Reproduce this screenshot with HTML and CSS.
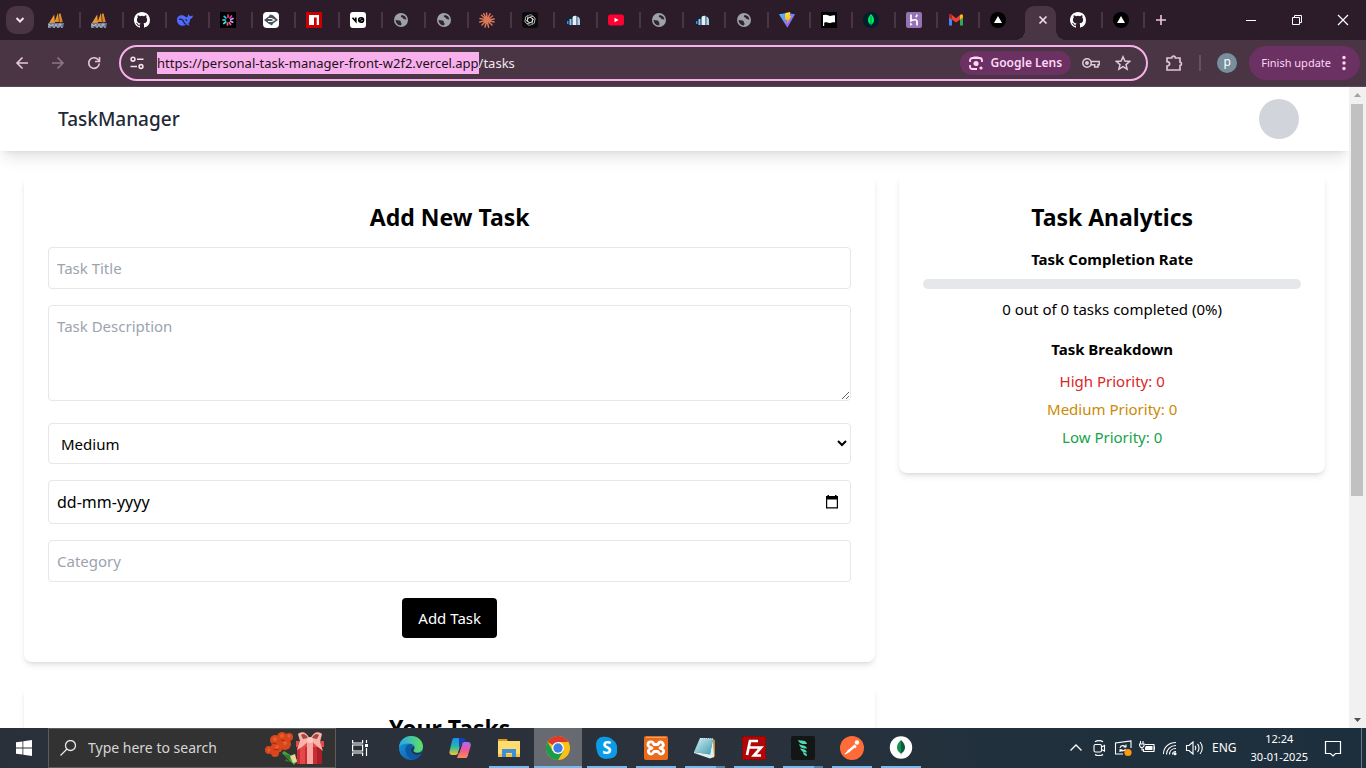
FILE: index.html
```html
<!DOCTYPE html>
<html lang="en">
<head>
<meta charset="utf-8">
<meta name="viewport" content="width=device-width, initial-scale=1">
<title>TaskManager</title>
<link rel="stylesheet" href="styles.css">
</head>
<body>
<svg class="defs" aria-hidden="true">
  <defs>
    <linearGradient id="sail" x1="0" y1="0" x2="1" y2="1"><stop offset="0" stop-color="#f8b54a"/><stop offset="1" stop-color="#d87a16"/></linearGradient>
    <linearGradient id="bolt" x1="0" y1="0" x2="0" y2="1"><stop offset="0" stop-color="#ffe83a"/><stop offset="1" stop-color="#ffa800"/></linearGradient>
    <linearGradient id="vitebg" x1="0" y1="0" x2="1" y2="1"><stop offset="0" stop-color="#41c7ff"/><stop offset="1" stop-color="#b83bf5"/></linearGradient>
    <linearGradient id="edgeA" x1="0" y1="0" x2="1" y2="0"><stop offset="0" stop-color="#28a8ee"/><stop offset="1" stop-color="#62e05c"/></linearGradient>
    <linearGradient id="edgeB" x1="0" y1="0" x2="1" y2="1"><stop offset="0" stop-color="#1b9de2"/><stop offset="1" stop-color="#0b4f9e"/></linearGradient>
    <linearGradient id="copA" x1="0" y1="0" x2="0" y2="1"><stop offset="0" stop-color="#1b8df5"/><stop offset=".5" stop-color="#26b8a8"/><stop offset="1" stop-color="#f4c430"/></linearGradient>
    <linearGradient id="copB" x1="0" y1="0" x2="0" y2="1"><stop offset="0" stop-color="#a56cf5"/><stop offset=".5" stop-color="#f0569a"/><stop offset="1" stop-color="#fb8a52"/></linearGradient>
    <linearGradient id="note" x1="0" y1="0" x2="1" y2="1"><stop offset="0" stop-color="#d7f1f5"/><stop offset="1" stop-color="#3c9cb0"/></linearGradient>
    <symbol id="mariadb" viewBox="0 0 16 16"><path fill="url(#sail)" d="M1 11 6.200 2.500 7 11zM6.500 10 10 .8l1 9.200zM11 2l1.400-.8L14.800 10l-3.200.4z"/><path fill="#6c7892" d="M0 11h16l-1 5h-2l-.8-3-.9 3H9l-1-3-1 3H5l-.8-2.500L3 16H0z"/><path stroke="#c5cbd7" stroke-width=".8" fill="none" d="M1 15.500V12l2 2 2-2v3.500m1.500 0 1.500-3.300 1.500 3.300M11 15.500v-3.300h2.300l-1 1.500 1.600 1.800"/></symbol>
    <symbol id="github" viewBox="0 0 16 16"><path fill="#fff" d="M8 0C3.580 0 0 3.580 0 8c0 3.540 2.290 6.530 5.470 7.590.4.070.55-.17.55-.38 0-.19-.01-.82-.01-1.490-2.010.37-2.530-.49-2.690-.94-.09-.23-.48-.94-.82-1.130-.28-.15-.68-.52-.01-.53.630-.01 1.080.58 1.230.82.720 1.210 1.870.87 2.330.66.070-.52.280-.87.510-1.070-1.780-.2-3.640-.89-3.640-3.950 0-.87.310-1.590.820-2.150-.08-.2-.36-1.020.080-2.120 0 0 .67-.21 2.200.82a7.600 7.600 0 0 1 4 0c1.530-1.040 2.200-.82 2.200-.82.440 1.100.160 1.920.080 2.120.510.560.820 1.270.820 2.150 0 3.070-1.870 3.750-3.650 3.950.290.250.540.730.540 1.480 0 1.070-.01 1.930-.01 2.200 0 .210.150.460.550.380A8 8 0 0 0 16 8c0-4.420-3.580-8-8-8z"/></symbol>
    <symbol id="deepseek" viewBox="0 0 16 16"><path fill="#4d6bfe" d="M8 4.600C5.500 2.200 0 3 0 8c0 4 3 5.800 5.800 5.800 2 0 3-.7 3.700-1.200 1 .8 2.300 1 3.300.6-.8-.3-1.300-1-1.300-1.700 1.500-1.400 1.700-3.300 1.600-4.500 1.500 0 2.700-1.200 2.900-3.700-.8.800-1.600.7-2.300 1-.9.200-1.700-1-2.700-2.200.2 2-.5 3-1 3.500z"/><path fill="none" stroke="#2c1b28" stroke-width="1.200" d="M2 7.400c2.500-1.300 4.500 1.200 5.200 3.300.5 1.200 1.300 1.500 2 1.300M8.300 7.500c1 .1 1.600.8 1.700 1.600"/></symbol>
    <symbol id="burst" viewBox="0 0 16 16"><path fill="#000" d="M0 0h16v16H0z"/><g stroke-width="1.700" stroke-linecap="round"><path stroke="#ff2e83" d="M8 5.200V3M10 6l1.500-2"/><path stroke="#c8a2ff" d="M10.700 7.500 13 6.500M10.600 9.300l2.200.9"/><path stroke="#ff5c8c" d="m9.300 10.600 1.300 2M7.500 11v2"/><path stroke="#3be9d0" d="m5.800 10-2 1.500M5.300 8H3"/><path stroke="#27c8ff" d="M6 6 4.200 4.300"/></g></symbol>
    <symbol id="dyte" viewBox="0 0 16 16"><rect width="16" height="16" rx="4" fill="#fff"/><path fill="#4a4f5b" d="m1 8 5-3.800 1-1.700 3 .7L15 8l-5 3.500-1 1.900-3.300-1.600z"/><path stroke="#fff" stroke-width="1.100" fill="none" d="M5 9.500h4L11.500 8 8.500 6.500H5.200"/></symbol>
    <symbol id="npm" viewBox="0 0 16 16"><path fill="#c00" d="M0 0h16v16H0z"/><path fill="#fff" d="M3 3h10v10h-2.300V5.500H8V13H3z"/></symbol>
    <symbol id="vzero" viewBox="0 0 16 16"><rect width="16" height="16" rx="3" fill="#fff"/><path fill="none" stroke="#000" stroke-width="1.700" d="m2.500 5.800 3.300 3.600V5.500M8.700 8c0-3 4.800-3 4.800 0s-4.800 3-4.800 0zm.6 1.600 3.600-3.400"/></symbol>
    <symbol id="globe" viewBox="0 0 16 16"><circle cx="8" cy="8" r="7" fill="#9da1a9"/><path fill="#33232f" d="M2.600 7.800c1.500.8 3.200.5 4.500 1 1.200.5.200 1.600 1.100 2.300.8.600.3 1.600-.4 2.400-3-.1-5.200-2.500-5.200-5.700zM8.600 2.900c-1.300 1.300-.8 2.100.2 2.400 1.100.2 1 1.500 2.100 1.800 1.200.3 1.600.5 2.500.3C13.200 4.800 11.200 3 8.600 2.900z"/></symbol>
    <symbol id="claude" viewBox="0 0 16 16"><g stroke="#d97757" stroke-width="1.500" stroke-linecap="round"><path d="m8 8-.4-7M8 8l3-6.300M8 8l5.500-4M8 8l7.200-1M8 8l7 2M8 8l5 5M8 8l1.500 7.200M8 8l-2 7M8 8l-5 5M8 8l-7.200 2M8 8 1 6.500M8 8 2.500 3.300M8 8 4.700 1.700"/></g></symbol>
    <symbol id="openai" viewBox="0 0 16 16"><rect width="16" height="16" rx="3" fill="#0c0c0c"/><g fill="none" stroke="#e4e4e4" stroke-width=".7"><path id="k" d="M8 5.200 10.500 6.700V10c0 2-1.500 3.200-3 3.200-1 0-1.800-.5-2.300-1.200"/><use href="#k" transform="rotate(60 8 8)"/><use href="#k" transform="rotate(120 8 8)"/><use href="#k" transform="rotate(180 8 8)"/><use href="#k" transform="rotate(240 8 8)"/><use href="#k" transform="rotate(300 8 8)"/></g></symbol>
    <symbol id="stripes" viewBox="0 0 16 16"><rect x=".5" y="3" width="8" height="11" rx="2" fill="#1e2230"/><path fill="#3b8fe0" d="M2 9h1.500v3H2z"/><path fill="#8fcdf7" d="M4.500 7h2v6h-2z"/><path fill="#dff3ff" d="M7.500 6c0-2 2-2.500 4-2v9h-4z"/><path fill="#a7d8f2" d="M12.300 4.500c2 .5 2.700 2.300 2.700 4V13h-2.700z"/></symbol>
    <symbol id="youtube" viewBox="0 0 16 16"><rect y="2.500" width="16" height="11" rx="2.500" fill="#ff0033"/><path fill="#fff" d="m6.500 5.800 4 2.200-4 2.200z"/></symbol>
    <symbol id="vite" viewBox="0 0 16 16"><path fill="url(#vitebg)" d="M0 2.200 8 1l8 1.200L8.400 15.700z"/><path fill="url(#bolt)" d="m6.300 1 5-1-.8 4.300 2-.4-4.700 8 .7-4.500-2.500.4z"/></symbol>
    <symbol id="flag" viewBox="0 0 16 16"><path fill="#000" d="M0 0h16v16H0z"/><path fill="#fff" d="M2 3h1.200c3-1.200 4.300 1.400 7 .8 1.300-.2 2-.8 3.800-.3v7c-2.200-.6-3.600.8-5.700.4-2-.4-3.300-.9-5.100-.1V14H2z"/></symbol>
    <symbol id="mongo" viewBox="0 0 16 16"><circle cx="8" cy="8" r="8" fill="#001e2b"/><path fill="#00ed64" d="M8 2c-2 2-3 4-3 6s1 3.400 2.700 4.600L8 14l.4-1.400C10 11.400 11 10 11 8S10 4 8 2z"/><path stroke="#006b36" stroke-width=".6" d="M8 4v9"/></symbol>
    <symbol id="heroku" viewBox="0 0 16 16"><rect width="16" height="16" rx="2" fill="#9572b6"/><path fill="none" stroke="#fff" stroke-width="1.700" d="M5 2.500v6.300c3-1.400 6-1.600 6 .7v4M11 2.500c0 1.200-.5 2-1.200 2.700"/><path fill="#fff" d="m4.200 10.500 2.300 1.700-2.300 1.700z"/></symbol>
    <symbol id="gmail" viewBox="0 0 16 16"><path fill="#4285f4" d="M1 13.500V4.300l3 2.200v7z"/><path fill="#34a853" d="M12 13.500v-7l3-2.200v9.200z"/><path fill="#ea4335" d="M1 5.500V3.800c0-1.300 1.400-1.900 2.400-1.200L8 6.200l4.600-3.600c1-.7 2.400-.1 2.400 1.200v1.700L8 10.500z"/><path fill="#fbbc04" d="M12 3.200c1.400-1.200 3-.5 3 1v1.300l-3 2.200z"/><path fill="#c5221f" d="M1 5.500V4c0-1.500 1.700-2 3-.9v4.600z"/></symbol>
    <symbol id="vercel" viewBox="0 0 16 16"><circle cx="8" cy="8" r="8" fill="#000"/><path fill="#fff" d="m8 4 4 7H4z"/></symbol>
  </defs>
</svg>
<div class="desktop">
  <div class="tabstrip">
    <button class="tab-search" aria-label="Search tabs"><svg class="i16" viewBox="0 0 16 16" fill="none" stroke="#f3dfec" stroke-width="2"><path d="m4.500 6 3.500 3.500L11.500 6"/></svg></button>
    <div class="tabs" role="tablist">
      <button class="tab" role="tab" aria-label="MariaDB"><svg class="i16"><use href="#mariadb"/></svg></button>
      <button class="tab" role="tab" aria-label="MariaDB"><svg class="i16"><use href="#mariadb"/></svg></button>
      <button class="tab" role="tab" aria-label="GitHub"><svg class="i16"><use href="#github"/></svg></button>
      <button class="tab" role="tab" aria-label="DeepSeek"><svg class="i16"><use href="#deepseek"/></svg></button>
      <button class="tab" role="tab" aria-label="Loader"><svg class="i16"><use href="#burst"/></svg></button>
      <button class="tab" role="tab" aria-label="Editor"><svg class="i16"><use href="#dyte"/></svg></button>
      <button class="tab" role="tab" aria-label="npm"><svg class="i16"><use href="#npm"/></svg></button>
      <button class="tab" role="tab" aria-label="v0"><svg class="i16"><use href="#vzero"/></svg></button>
      <button class="tab" role="tab" aria-label="Page"><svg class="i16"><use href="#globe"/></svg></button>
      <button class="tab" role="tab" aria-label="Page"><svg class="i16"><use href="#globe"/></svg></button>
      <button class="tab" role="tab" aria-label="Claude"><svg class="i16"><use href="#claude"/></svg></button>
      <button class="tab" role="tab" aria-label="ChatGPT"><svg class="i16"><use href="#openai"/></svg></button>
      <button class="tab" role="tab" aria-label="App"><svg class="i16"><use href="#stripes"/></svg></button>
      <button class="tab" role="tab" aria-label="YouTube"><svg class="i16"><use href="#youtube"/></svg></button>
      <button class="tab" role="tab" aria-label="Page"><svg class="i16"><use href="#globe"/></svg></button>
      <button class="tab" role="tab" aria-label="App"><svg class="i16"><use href="#stripes"/></svg></button>
      <button class="tab" role="tab" aria-label="Page"><svg class="i16"><use href="#globe"/></svg></button>
      <button class="tab" role="tab" aria-label="Vite"><svg class="i16"><use href="#vite"/></svg></button>
      <button class="tab" role="tab" aria-label="Flag"><svg class="i16"><use href="#flag"/></svg></button>
      <button class="tab" role="tab" aria-label="MongoDB"><svg class="i16"><use href="#mongo"/></svg></button>
      <button class="tab" role="tab" aria-label="Heroku"><svg class="i16"><use href="#heroku"/></svg></button>
      <button class="tab" role="tab" aria-label="Gmail"><svg class="i16"><use href="#gmail"/></svg></button>
      <button class="tab tab-last" role="tab" aria-label="Vercel"><svg class="i16"><use href="#vercel"/></svg></button>
      <button class="tab tab-active" role="tab" aria-selected="true" aria-label="TaskManager"><svg class="i16" viewBox="0 0 16 16" stroke="#f3dfec" stroke-width="1.600"><path d="m4.500 4.500 7 7m0-7-7 7"/></svg></button>
      <button class="tab" role="tab" aria-label="GitHub"><svg class="i16"><use href="#github"/></svg></button>
      <button class="tab" role="tab" aria-label="Vercel"><svg class="i16"><use href="#vercel"/></svg></button>
    </div>
    <button class="newtab" aria-label="New tab"><svg class="i16" viewBox="0 0 16 16" stroke="#e9c6de" stroke-width="1.600"><path d="M8 3v10M3 8h10"/></svg></button>
    <div class="winctl">
      <button aria-label="Minimize"><svg class="i16" viewBox="0 0 16 16" stroke="#fff"><path d="M3 8.500h10"/></svg></button>
      <button aria-label="Restore"><svg class="i16" viewBox="0 0 16 16" stroke="#fff" fill="none"><path d="M3.500 5.500h7v7h-7zM5.500 5.500v-2h7v7h-2"/></svg></button>
      <button aria-label="Close"><svg class="i16" viewBox="0 0 16 16" stroke="#fff" stroke-width="1.200"><path d="m3 3 10 10m0-10L3 13"/></svg></button>
    </div>
  </div>

  <div class="toolbar">
    <nav class="nav" aria-label="History">
      <button aria-label="Back"><svg class="i16" viewBox="0 0 16 16" fill="none" stroke="#e9c6de" stroke-width="1.600"><path d="M14 8H3m5.500-5.500L3 8l5.500 5.500"/></svg></button>
      <button aria-label="Forward"><svg class="i16" viewBox="0 0 16 16" fill="none" stroke="#907489" stroke-width="1.600"><path d="M2 8h11M7.500 2.500 13 8l-5.500 5.500"/></svg></button>
      <button aria-label="Reload"><svg class="i16" viewBox="0 0 16 16" fill="none" stroke="#e9c6de" stroke-width="1.600"><path d="M13.300 8.500A5.300 5.300 0 1 1 12 4.500l1 1M13.500 2v4.500H9"/></svg></button>
    </nav>
    <form class="omnibox">
      <svg class="i16" viewBox="0 0 16 16" fill="none" stroke="#f3dfec" stroke-width="1.600"><circle cx="4" cy="4.200" r="1.900"/><path d="M8 4.200h6.500M1.500 11.500H8"/><circle cx="12" cy="11.500" r="1.900"/></svg>
      <input class="url" id="url" type="text" aria-label="Address" spellcheck="false" value="https://personal-task-manager-front-w2f2.vercel.app/tasks">
      <button class="lens" type="button"><svg class="i16" viewBox="0 0 16 16" fill="none" stroke="#ffd7f5" stroke-width="1.800"><path d="M2 7V5.500A2.500 2.500 0 0 1 4.500 3h7A2.500 2.500 0 0 1 14 5.500V7M5.500 2.300h5M2 10v1.500A2.500 2.500 0 0 0 4.500 14H9"/><circle cx="8" cy="8.500" r="1.700" fill="#ffd7f5"/><circle cx="13" cy="13" r=".7"/></svg><span>Google Lens</span></button>
      <button class="omni-btn" type="button" aria-label="Passwords"><svg class="key" viewBox="0 0 18 16" fill="none" stroke="#e0cbd9" stroke-width="1.500"><circle cx="5" cy="8" r="4.200"/><path d="M9 6.500h8.200v3.300H16V12h-3.300V9.700H9"/><circle cx="5" cy="8" r="1.200" fill="#e0cbd9"/></svg></button>
      <button class="omni-btn" type="button" aria-label="Bookmark"><svg class="i16" viewBox="0 0 16 16" fill="none" stroke="#e0cbd9" stroke-width="1.500"><path d="m8 1.800 1.900 4.300 4.700.4-3.600 3.100 1.100 4.600L8 11.700l-4.100 2.500L5 9.600 1.400 6.500l4.700-.4z"/></svg></button>
    </form>
    <button class="ext" aria-label="Extensions"><svg class="i18" viewBox="0 0 18 18" fill="none" stroke="#e0c3d6" stroke-width="1.700"><path d="M2 4h4.700c0-2.500 3.600-2.500 3.600 0H15v4.200c2 0 2 3.300 0 3.300V16H2v-4c3.500-.3 3.500-4 0-4.300z"/></svg></button>
    <span class="rule"></span>
    <button class="profile" aria-label="Profile">p</button>
    <button class="update"><span>Finish update</span><svg class="dots" viewBox="0 0 4 16" fill="#ffd7f5"><circle cx="2" cy="2.500" r="1.700"/><circle cx="2" cy="8" r="1.700"/><circle cx="2" cy="13.500" r="1.700"/></svg></button>
  </div>

  <div class="viewport">
    <div class="page">
      <header class="site-header"><a class="brand" href="#">TaskManager</a><button class="avatar" aria-label="Account"></button></header>
      <main class="content">
        <div class="column">
          <section class="card">
            <h2>Add New Task</h2>
            <form class="task-form">
              <input class="field" type="text" placeholder="Task Title" aria-label="Task Title">
              <textarea class="field area" placeholder="Task Description" aria-label="Task Description"></textarea>
              <select class="field pick" aria-label="Priority"><option>Low</option><option selected>Medium</option><option>High</option></select>
              <div class="date"><input class="field date-input" type="text" value="dd-mm-yyyy" aria-label="Due date"><button class="date-btn" type="button" aria-label="Open calendar"><svg class="i16" viewBox="0 0 16 16"><path fill="#000" d="M3.500 1H5v1h6V1h1.500v1H14v12.500H2V2h1.500zM3.200 5.500v7.800h9.600V5.500z" fill-rule="evenodd"/></svg></button></div>
              <input class="field" type="text" placeholder="Category" aria-label="Category">
              <button class="submit" type="button">Add Task</button>
            </form>
          </section>
          <section class="card"><h2>Your Tasks</h2></section>
        </div>
        <aside class="card analytics">
          <h2>Task Analytics</h2>
          <h3>Task Completion Rate</h3>
          <div class="progress" role="progressbar" aria-valuenow="0" aria-label="Completion"></div>
          <p class="rate">0 out of 0 tasks completed (0%)</p>
          <h3>Task Breakdown</h3>
          <ul class="breakdown"><li class="high">High Priority: 0</li><li class="medium">Medium Priority: 0</li><li class="low">Low Priority: 0</li></ul>
        </aside>
      </main>
    </div>
    <div class="scrollbar" aria-hidden="true">
      <svg class="arrow" viewBox="0 0 17 17"><path fill="#a3a3a3" d="m8.500 6 3.500 4H5z"/></svg>
      <div class="track"><div class="thumb"></div></div>
      <svg class="arrow" viewBox="0 0 17 17"><path fill="#505050" d="m8.500 11 3.500-4H5z"/></svg>
    </div>
  </div>

  <footer class="taskbar">
    <button class="start" aria-label="Start"><svg class="i16" viewBox="0 0 16 16" fill="#fff"><path d="m0 2.300 6.500-.9v6.200H0zM7.300 1.300 16 0v7.600H7.300zM0 8.400h6.500v6.200L0 13.700zM7.300 8.400H16V16l-8.700-1.300z"/></svg></button>
    <label class="search">
      <svg class="i16" viewBox="0 0 16 16" fill="none" stroke="#e8e8e8" stroke-width="1.300"><circle cx="10.500" cy="5.500" r="5"/><path d="M7 9 .5 15.500"/></svg>
      <input type="text" placeholder="Type here to search" aria-label="Type here to search">
      <svg class="gift" viewBox="0 0 60 36">
        <path fill="#47a33a" d="m20 21 14 9-4 5-12-12z"/><path fill="#2d7d2c" d="m20 24 8 2-3 4zM22 29l5 3-6-1z"/><path fill="#e8d79c" d="m26 26 5-2 2 8-4 1z"/>
        <g fill="#d9451d"><circle cx="11" cy="10" r="5"/><circle cx="18" cy="7" r="5"/><circle cx="25" cy="7" r="4"/><circle cx="21" cy="14" r="6"/><circle cx="13" cy="17" r="6"/><circle cx="5" cy="20" r="4"/><circle cx="11" cy="23" r="4"/></g>
        <g fill="#e85f2c"><circle cx="11" cy="9" r="2"/><circle cx="18" cy="6" r="2"/><circle cx="21" cy="13" r="2"/><circle cx="13" cy="17" r="2"/><circle cx="25" cy="6" r="1.500"/><circle cx="5" cy="20" r="1.500"/></g>
        <path stroke="#a92a12" fill="none" d="m8 13 5 1m4-4 4 1m-11 9 5-1"/>
        <path fill="#c92d33" d="M33 14h25v20H33z"/><path fill="#e5484b" d="M32 11h28v6H32zM36 17h5v17h-5z"/><path fill="#a91f28" d="M53 17h5v17h-5z"/><path fill="#f6a9a3" d="M43 10h6v24h-6z"/>
        <path fill="#f7b3ac" d="M46 9c-4-8-9-8-12-5l2 7-3 9 5-3 8-7 8 7 5 4-3-9 2-8c-3-3-8-3-12 5z"/><path fill="#a8473e" d="M44 8c-2-4-5-5-7-3l2 4zm4 0c2-4 5-5 7-3l-2 4z"/><circle cx="46" cy="10" r="3" fill="#fdc9c1"/>
      </svg>
    </label>
    <button class="app" aria-label="Task View"><svg class="i16" viewBox="0 0 16 16" fill="none" stroke="#fff" stroke-width="1.200"><path d="M.6 0v3h10V0M.6 5h10v6H.6zM.6 16v-3h10v3M14.500 0v3M14.500 8v8"/><path fill="#fff" stroke="none" d="M13 4h3v3h-3z"/></svg></button>
    <div class="apps">
      <button class="app" aria-label="Edge"><svg class="i24" viewBox="0 0 24 24"><circle cx="12" cy="12" r="12" fill="url(#edgeB)"/><path fill="url(#edgeA)" d="M0 11C1 4 6 0 12 0c7 0 12 5 12 10.500 0 4-3 6-6 6-3.500 0-4-2-3-3 2-2 0-6-5-6C5 7.500 1 9 0 11z"/><path fill="#0c59a4" d="M12 8c-5 0-6 4-5.500 7 .7 5 5 8 9 8.500 3-.7 5.500-3 7-5.500-5 2-11 0-10.500-4.500.1-1.500 1.500-2 1.500-3S13 8 12 8z"/><path fill="#2a313b" d="M15 10.500c-2.500.8-3.500 3-2.500 5 1.500 3.500 7 4 10 2 .8-.6.5-1.500-.5-1-2.500 1-6 .7-7.300-.8-1.200-1.400 1-3 .3-5.200z"/></svg></button>
      <button class="app" aria-label="Copilot"><svg class="i24" viewBox="0 0 24 24"><path fill="url(#copA)" d="M6 2h9l-5 15c-.5 1.500-1.500 2-3 2H4c-2 0-3-2-2.500-3.500L4 5c.5-2 1-3 2-3z"/><path fill="url(#copB)" d="M18 22H9l5-14c.5-1.500 1.500-2 3-2h3c2 0 3.300 2 2.700 4L20 19c-.5 2-1 3-2 3z"/><path fill="#173fb5" d="M11 2h4c2 0 2 2 3 4h-2c-2 0-3 1-3.500 2.500L11 12z"/><path fill="#2a313b" d="m13 8-3 9h1.300l3-9z"/></svg></button>
      <button class="app open" aria-label="File Explorer"><svg class="i24" viewBox="0 0 24 24"><path fill="#d99a16" d="M1 3h9l1 3H1z"/><path fill="#ffdb70" d="M1 5h22v16H1z"/><path fill="#f4c046" d="M1 18h22v3H1z"/><path fill="#3f8fd4" d="M5 13h14v8h-4v-4H9v4H5z"/></svg></button>
      <button class="app open current" aria-label="Chrome"><svg class="i24" viewBox="0 0 24 24"><circle cx="12" cy="12" r="12" fill="#fbc116"/><path fill="#db3a2c" d="M12 12 1.600 6A12 12 0 0 1 22.400 6H12z"/><path fill="#1c9b4b" d="M12 12 6.700 15 1.600 6A12 12 0 0 0 12 24l5.500-9z"/><circle cx="12" cy="12" r="6" fill="#fff"/><circle cx="12" cy="12" r="4.700" fill="#3c7de8"/></svg></button>
      <button class="app open" aria-label="Skype"><svg class="i24" viewBox="0 0 24 24"><path fill="#0a9ce6" d="M7 1c4-.5 8 0 11 3 3 2 4.500 5 4 9 1 6-3 10-8 9.500C8 24 3 21 2 15 0 8 1 2 7 1z"/><text class="skype" x="12" y="18" text-anchor="middle">S</text></svg></button>
      <button class="app open" aria-label="XAMPP"><svg class="i24" viewBox="0 0 24 24"><rect width="24" height="24" rx="2" fill="#ea6b1b"/><path fill="#f6a36a" d="M2 1h20v1H2z"/><path fill="none" stroke="#fff" stroke-width="2.800" stroke-linejoin="round" d="M7 6a2.500 2.500 0 0 0-1 5l2 1-2 1a2.600 2.600 0 1 0 3 4l1-1.500h4l1 1.500a2.600 2.600 0 1 0 3-4l-2-1 2-1a2.500 2.500 0 1 0-3-4.500L14 8.500h-4L9 6.500A2.500 2.500 0 0 0 7 6z"/></svg></button>
      <button class="app open multi" aria-label="Notepad"><svg class="i24" viewBox="0 0 24 24"><path fill="#b48c35" d="m20 3 2 1v16l-2 2z"/><path fill="url(#note)" d="m7 2 13 .5-3 16L1 16z"/><path fill="#dceff4" d="M1 16 17 18.500 20 3l1 18-4 1.500L1 17z"/><path stroke="#eefaff" d="m7 2.500 13 .5" stroke-dasharray="1 1"/></svg></button>
      <button class="app open" aria-label="FileZilla"><svg class="i24" viewBox="0 0 24 24"><path fill="#b00808" d="M0 0h24v24H0z"/><path fill="none" stroke="#5d0508" stroke-dasharray="1 2" d="M.5.500h23v23H.500z"/><path fill="none" stroke="#fff" stroke-width="2.700" d="M5 19 8 5h8M6.500 11.500H13M12 11.500h7L12 19.500h7"/></svg></button>
      <button class="app open multi" aria-label="Terminal"><svg class="i24" viewBox="0 0 24 24"><rect width="24" height="24" rx="2" fill="#121615"/><path fill="#54d8b4" d="M7 4c3 1 8-.5 9 4-4 .5-8-.5-9-4zM8 8c2 2 7 .5 8 4.500-4 .5-7-.5-8-4.500zM9 12c2 1.500 6 .5 7 4.500-4 0-6-1.500-7-4.500zM12 16c2 1 4 1 4 4-2 0-4-1.500-4-4z"/></svg></button>
      <button class="app open" aria-label="Postman"><svg class="i24" viewBox="0 0 24 24"><circle cx="12" cy="12" r="12" fill="#ff6c37"/><circle cx="17" cy="6.500" r="2.200" fill="#fff"/><path fill="#fff" d="m14.500 8.500 2 1.500-7.200 6.300-3.500 1.500 1.700-3.300z"/><path stroke="#fff" stroke-width="1.300" d="m5 18 3-2M16 10l-1 2"/></svg></button>
      <button class="app open" aria-label="MongoDB Compass"><svg class="i24" viewBox="0 0 24 24"><circle cx="12" cy="11.500" r="11.200" fill="#fff"/><path fill="#12924f" d="M12 4c-3 3-4 5-4 7.500S9.500 16 11.700 17.500l.3 2z"/><path fill="#0a5d3c" d="M12 4c3 3 4 5 4 7.500s-1.500 4.500-3.700 6l-.3 2z"/></svg></button>
    </div>
    <div class="tray">
      <svg class="i16" viewBox="0 0 16 16" fill="none" stroke="#fff" stroke-width="1.300"><path d="m2.500 10.500 5.500-5.500 5.500 5.500"/></svg>
      <svg class="i16" viewBox="0 0 16 16" fill="none" stroke="#fff" stroke-width="1.100"><rect x="3" y="4.500" width="7.500" height="7.500" rx="1.500"/><path d="m10.500 7 3-1.500v5.500l-3-1.500M4 1.800C6 .2 10 .2 12 1.800M4 14.500c2 1.500 6 1.500 8 0"/></svg>
      <svg class="i18" viewBox="0 0 18 18" fill="none" stroke="#fff" stroke-width="1.100"><path d="M17 9V2L1.500 4v11H9M6 9c.5-3 4.500-3 5.500-1M12 5.500V8H9.500M11.500 10c-.5 2-4 2.500-5.500 1M6 13v-2.200h2.500"/><circle cx="14" cy="13.500" r="3.600" fill="#ff9a0b" stroke="none"/></svg>
      <svg class="i16" viewBox="0 0 16 16" fill="none" stroke="#fff" stroke-width="1.100"><path d="M6 4.500h9v7H4.500V9M15.500 6.500v3M1.500 1v3M4 1v3M.5 4h4.700c0 3-1 3.500-2.200 3.500S.5 6.500.5 4zM3 7.500V10h2"/><path fill="#fff" stroke="none" d="M7 6h6.500v4H6V7.500z"/></svg>
      <svg class="i16" viewBox="0 0 16 16" fill="none" stroke="#fff" stroke-width="1.100"><path d="M1.500 14C1.500 7 7 2.500 14 2.500M4.500 14.500c0-5 4-9 9.500-9M7.500 14.500c0-3.500 2.500-6 6.500-6M10.500 14.500c0-2 1.500-3 3.500-3"/><circle cx="13" cy="13.700" r="1" fill="#fff"/></svg>
      <svg class="i18" viewBox="0 0 18 18" fill="none" stroke="#fff" stroke-width="1.100"><path d="M1.500 6.500h2.500L8 3v12l-4-3.500H1.500zM10 7c1 1 1 3 0 4M12.500 5c2 2 2 6 0 8M15 3c3 3.500 3 8.500 0 12"/></svg>
      <span class="lang">ENG</span>
      <div class="clock"><time>12:24</time><time>30-01-2025</time></div>
      <button class="notice" aria-label="Notifications"><svg class="i18" viewBox="0 0 18 18" fill="none" stroke="#fff" stroke-width="1.200"><path d="M1.500 2.500h15v12h-5L9 17l-2.500-2.500h-5z"/></svg></button>
    </div>
  </footer>
</div>
<script src="script.js"></script>
</body>
</html>
```
FILE: styles.css
```css
*, *::before, *::after { box-sizing: border-box; }
body { margin: 0; font-family: "Noto Sans", "Open Sans", sans-serif; font-size: 15px; line-height: 24px; color: #000; background: #fff; }
button, input, select, textarea { font: inherit; color: inherit; }
button { border: 0; padding: 0; background: none; display: flex; align-items: center; justify-content: center; }
svg { display: block; flex: none; }
h2, h3, p, ul { margin: 0; padding: 0; }
.defs { position: absolute; width: 0; height: 0; }
.i16 { width: 16px; height: 16px; }
.i18 { width: 18px; height: 18px; }
.i24 { width: 24px; height: 24px; }
.desktop { display: flex; flex-direction: column; height: 100vh; overflow: hidden; }

/* Browser tabs */
.tabstrip { display: flex; align-items: center; height: 40px; flex: none; background: #2c1b28; }
.tab-search { width: 28px; height: 28px; margin: 0 4px 0 6px; border-radius: 10px; background: #4a3544; flex: none; }
.tabs { display: flex; align-self: stretch; flex: 1; }
.tab { flex: 42; justify-content: flex-start; padding-left: 10px; position: relative; }
.tab:nth-child(-n+15) { flex: 43; }
.tab::after { content: ""; position: absolute; right: 0; top: 12px; width: 2px; height: 16px; background: #4a3544; }
.tab-last::after { display: none; }
.tab-active { flex: 36; justify-content: center; margin: 6px 4px 0 2px; padding: 0 0 6px 4px; border-radius: 9px 9px 0 0; background: #4a3544; }
.tab-active::before, .tab-active::after { content: ""; position: absolute; top: auto; bottom: 0; width: 10px; height: 10px; background: radial-gradient(circle at 0 0, transparent 10px, #4a3544 10px); }
.tab-active::before { left: -10px; }
.tab-active::after { right: -10px; background: radial-gradient(circle at 100% 0, transparent 10px, #4a3544 10px); }
.newtab { width: 32px; height: 32px; flex: none; }
.winctl { display: flex; align-self: stretch; margin-left: 51px; flex: none; }
.winctl button { width: 46px; }

/* Toolbar */
.toolbar { display: flex; align-items: center; height: 47px; flex: none; padding: 0 6px 1px 0; background: #4a3544; box-shadow: inset 0 -1px #5b4755; }
.nav { display: flex; gap: 20px; padding: 0 17px 0 14px; }
.omnibox { display: flex; align-items: center; flex: 1; height: 36px; padding: 0 15px 0 8px; border: 2px solid #f8b0ec; border-radius: 18px; min-width: 0; }
.url { flex: 1; min-width: 0; height: 22px; margin-left: 12px; padding: 0; border: 0; outline: 0; background: none; color: #f3e6ef; font-size: 13px; line-height: 22px; }
.url::selection { background: #f8b0ec; color: #1d1020; }
.lens { gap: 6px; height: 24px; margin-right: 11px; padding: 0 9px 0 8px; border-radius: 12px; background: #6a3162; color: #ffd7f5; font-size: 12px; font-weight: 600; white-space: nowrap; }
.omni-btn { margin-right: 15px; }
.omni-btn:last-child { margin-right: 0; }
.key { width: 18px; height: 16px; }
.ext { width: 18px; margin-left: 17px; }
.rule { width: 2px; height: 16px; margin: 0 16px; background: #6a4f63; }
.profile { width: 20px; height: 20px; border-radius: 50%; background: #78909c; color: #fff; font-size: 12px; line-height: 16px; padding-bottom: 2px; }
.update { gap: 11px; height: 34px; margin-left: 12px; padding: 0 14px 0 12px; border-radius: 17px; background: #6a3162; color: #ffd7f5; font-size: 11px; white-space: nowrap; }
.dots { width: 4px; height: 16px; }

/* Page */
.viewport { display: flex; flex: 1; min-height: 0; background: #fff; }
.page { flex: 1; min-width: 0; overflow: hidden; }
.site-header { display: flex; align-items: center; justify-content: space-between; height: 64px; padding: 0 50px 0 58px; background: #fff; box-shadow: 0 10px 15px -3px rgb(0 0 0 / .1), 0 4px 6px -4px rgb(0 0 0 / .1); position: relative; }
.brand { color: #1f2937; font-size: 19px; line-height: 28px; font-weight: 500; text-decoration: none; }
.avatar { width: 40px; height: 40px; border-radius: 50%; background: #d1d5db; }
.content { display: grid; grid-template-columns: 2fr 1fr; gap: 24px; align-items: start; padding: 24px; }
.column { display: grid; gap: 24px; }
.card { padding: 24px; border-radius: 8px; background: #fff; box-shadow: 0 4px 6px -1px rgb(0 0 0 / .1), 0 2px 4px -2px rgb(0 0 0 / .1); }
h2 { padding-top: 2px; margin-bottom: 14px; font-size: 23px; line-height: 32px; font-weight: 700; text-align: center; }
h3 { font-size: 15px; line-height: 24px; font-weight: 700; margin-bottom: 8px; }
.task-form { display: flex; flex-direction: column; gap: 16px; }
.field { display: block; width: 100%; height: 42px; padding: 8px; border: 1px solid #e5e7eb; border-radius: 4px; background: #fff; line-height: 24px; outline: 0; }
.field::placeholder { color: #9ca3af; opacity: 1; }
.area { height: 96px; margin-bottom: 6px; resize: vertical; }
.pick { height: 41px; padding: 8px; }
.date { position: relative; }
.date-input { height: 44px; font-size: 16px; }
.date-btn { position: absolute; right: 11px; top: 14px; }
.submit { align-self: center; height: 40px; padding: 0 16px; border-radius: 4px; background: #000; color: #fff; }
.analytics { text-align: center; }
.progress { height: 10px; border-radius: 5px; background: #e5e7eb; }
.rate { margin: 8px 0 16px; }
.breakdown { display: grid; gap: 4px; list-style: none; }
.high { color: #dc2626; }
.medium { color: #ca8a04; }
.low { color: #16a34a; }
.scrollbar { display: flex; flex-direction: column; width: 17px; background: #f1f1f1; }
.arrow { width: 17px; height: 17px; }
.track { flex: 1; padding: 0 3px 0 2px; }
.thumb { height: 64.6%; background: #c1c1c1; }

/* Taskbar */
.taskbar { display: flex; flex: none; height: 40px; background: linear-gradient(90deg, #29303a, #2c323c 50%, #20303d 75%, #1d2f3d); color: #fff; }
.start { width: 48px; }
.search { display: flex; align-items: center; width: 288px; padding: 0 11px; border: 1px solid #5d5d5d; background: #323232; }
.search input { flex: 1; min-width: 0; margin-left: 12px; padding: 0; border: 0; outline: 0; background: none; font-size: 14px; }
.search input::placeholder { color: #d6d6d6; opacity: 1; }
.gift { width: 60px; height: 36px; }
.app { position: relative; width: 48px; }
.apps { display: flex; gap: 1px; margin-left: 3px; }
.open::after { content: ""; position: absolute; left: 4px; right: 4px; bottom: 0; height: 2px; background: #76b9ed; }
.current { background: #676b71; }
.current::after { left: 0; right: 0; }
.multi::after { background: linear-gradient(90deg, #76b9ed 31px, #5185ae 31px); }
.skype { fill: #fff; font-size: 17px; font-weight: 700; }
.tray { display: flex; align-items: center; gap: 7px; margin-left: auto; padding-right: 4px; }
.lang { font-size: 12px; margin-left: 2px; }
.clock { display: flex; flex-direction: column; align-items: center; margin-left: 7px; line-height: 18px; font-size: 11px; }
.notice { width: 47px; align-self: stretch; border-right: 1px solid #6b7883; padding-right: 10px; }
```
FILE: script.js
```js
const url = document.getElementById("url");
const host = "https://personal-task-manager-front-w2f2.vercel.app";
url.focus({ preventScroll: true });
url.setSelectionRange(0, host.length);
```
